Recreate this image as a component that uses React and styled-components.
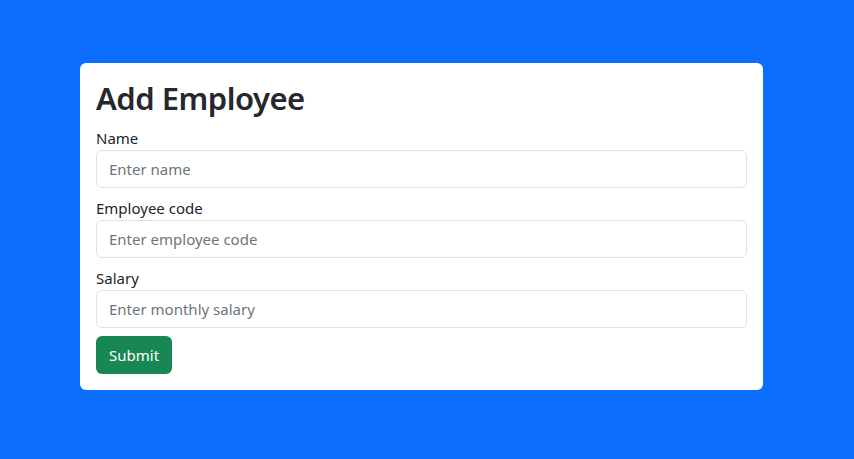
import React from "react";
import styled, { createGlobalStyle } from "styled-components";

const GlobalStyle = createGlobalStyle`
  html, body { margin: 0; padding: 0; }
  body {
    background: #0d6efd;
    font-family: "Noto Sans", "Open Sans", sans-serif;
    color: #212529;
    min-height: 459px;
  }
`;

const Page = styled.div`
  padding: 63px 0 0 80px;
`;

const Card = styled.form`
  width: 683px;
  box-sizing: border-box;
  background: #fff;
  border-radius: 6px;
  padding: 16px;
  display: flex;
  flex-direction: column;
`;

const Title = styled.h1`
  margin: 0 0 8px;
  font-size: 31px;
  font-weight: 600;
  line-height: 39px;
  letter-spacing: -0.5px;
  color: #25282c;
`;

const Field = styled.div`
  display: flex;
  flex-direction: column;
  margin-bottom: 8px;
`;

const Label = styled.label`
  font-size: 15px;
  line-height: 24px;
`;

const Input = styled.input`
  height: 38px;
  box-sizing: border-box;
  padding: 6px 12px;
  border: 1px solid #dee2e6;
  border-radius: 6px;
  font-family: inherit;
  font-size: 15px;
  color: #212529;
  outline: none;
  &::placeholder { color: #6c757d; }
`;

const Button = styled.button`
  align-self: flex-start;
  height: 38px;
  padding: 6px 13px;
  border: none;
  border-radius: 6px;
  background: #198754;
  color: #fff;
  font-family: inherit;
  font-size: 15px;
  cursor: pointer;
`;

const fields = [
  { label: "Name", placeholder: "Enter name" },
  { label: "Employee code", placeholder: "Enter employee code" },
  { label: "Salary", placeholder: "Enter monthly salary" },
];

const App = () => {
  return (
    <Page>
      <GlobalStyle />
      <Card onSubmit={(e) => e.preventDefault()}>
        <Title>Add Employee</Title>
        {fields.map((f) => (
          <Field key={f.label}>
            <Label>{f.label}</Label>
            <Input placeholder={f.placeholder} />
          </Field>
        ))}
        <Button type="submit">Submit</Button>
      </Card>
    </Page>
  );
};

export default App;
